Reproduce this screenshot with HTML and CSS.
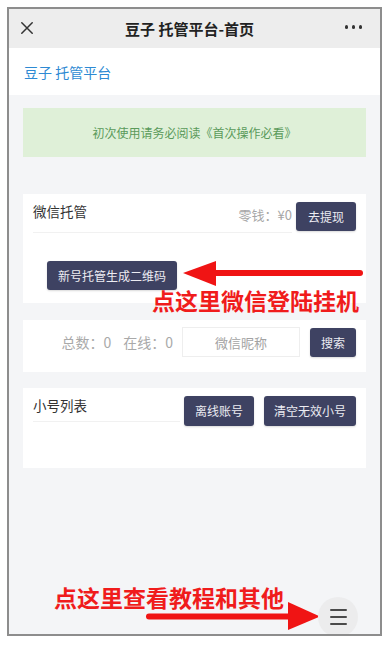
FILE: index.html
```html
<!DOCTYPE html>
<html lang="zh-CN">
<head>
<meta charset="utf-8">
<title>豆子 托管平台-首页</title>
<link rel="stylesheet" href="styles.css">
</head>
<body>
<div class="frame">
  <header class="topbar">
    <svg class="close" viewBox="0 0 12 12" width="12" height="12"><path d="M0.8 0.8 L11.2 11.2 M11.2 0.8 L0.8 11.2" stroke="#333" stroke-width="1.5" fill="none" stroke-linecap="round"/></svg>
    <h1 class="title">豆子 托管平台-首页</h1>
    <span class="more"><i></i><i></i><i></i></span>
  </header>
  <div class="brand">豆子 托管平台</div>
  <main class="content">
    <div class="notice">初次使用请务必阅读《首次操作必看》</div>

    <section class="card card-wx">
      <div class="card-head">
        <div class="head-left">
          <span class="card-title">微信托管</span>
          <span class="balance">零钱：¥0</span>
        </div>
        <button class="btn">去提现</button>
      </div>
      <div class="card-body">
        <button class="btn">新号托管生成二维码</button>
      </div>
    </section>

    <section class="card card-search">
      <span class="stat">总数：0</span>
      <span class="stat">在线：0</span>
      <input class="nick" type="text" placeholder="微信昵称">
      <button class="btn">搜索</button>
    </section>

    <section class="card card-list">
      <div class="card-head">
        <div class="head-left">
          <span class="card-title">小号列表</span>
        </div>
        <div class="head-btns">
          <button class="btn">离线账号</button>
          <button class="btn">清空无效小号</button>
        </div>
      </div>
    </section>
  </main>

  <svg class="annot" viewBox="0 0 371 625" width="371" height="625">
    <line x1="205" y1="264" x2="351" y2="264" stroke="#f01414" stroke-width="6" stroke-linecap="round"/>
    <polygon points="174,264 207,252 207,277" fill="#f01414"/>
    <line x1="140" y1="607.5" x2="284" y2="607.5" stroke="#f01414" stroke-width="6" stroke-linecap="round"/>
    <polygon points="311,607.5 279,593 279,621" fill="#f01414"/>
  </svg>
  <div class="tip tip-login">点这里微信登陆挂机</div>
  <div class="tip tip-menu">点这里查看教程和其他</div>

  <button class="fab" aria-label="菜单"><i></i><i></i><i></i></button>
</div>
</body>
</html>
```

FILE: styles.css
```css
* { box-sizing: border-box; }
html, body { margin: 0; padding: 0; background: #fff; }
body {
  font-family: "Noto Sans CJK SC", "Noto Sans", sans-serif;
  color: #333;
}
.frame {
  position: relative;
  margin: 7px 0 0 7px;
  width: 375px;
  height: 629px;
  border: 2px solid #8d8d8d;
  background: #f4f5f7;
  overflow: hidden;
  display: flex;
  flex-direction: column;
}
.topbar {
  height: 39px;
  flex: none;
  background: #ededed;
  display: grid;
  grid-template-columns: 1fr auto 1fr;
  align-items: center;
  padding: 0 18px 0 12px;
}
.close { display: block; margin-top: -2px; }
.title {
  margin: 0 4px 0 0;
  font-size: 15px;
  font-weight: 700;
  color: #222;
  line-height: 20px;
}
.more {
  justify-self: end;
  display: flex;
  gap: 3.3px;
  margin-top: -3px;
}
.more i {
  width: 3.5px;
  height: 3.5px;
  border-radius: 50%;
  background: #333;
}
.brand {
  height: 47px;
  flex: none;
  background: #fff;
  display: flex;
  align-items: center;
  padding-left: 15px;
  font-size: 14px;
  color: #2e8ad3;
}
.content {
  padding: 13px 14px 0;
  display: flex;
  flex-direction: column;
}
.notice {
  height: 49px;
  background: #dff0d8;
  display: flex;
  align-items: center;
  justify-content: center;
  font-size: 12px;
  color: #5a9a5a;
}
.card {
  background: #fff;
}
.card-wx { margin-top: 37px; height: 109px; }
.card-search { margin-top: 17px; height: 52px; }
.card-list { margin-top: 16px; height: 80px; }

.card-head {
  display: flex;
  align-items: flex-start;
  padding: 7px 10px 0;
  gap: 4px;
}
.head-left {
  flex: 1;
  display: flex;
  justify-content: space-between;
  align-items: flex-start;
  padding-bottom: 7px;
  border-bottom: 1px solid #f1f1f1;
}
.card-title {
  font-size: 13.5px;
  line-height: 20px;
  color: #333;
}
.balance {
  font-size: 13px;
  line-height: 20px;
  margin-top: 4px;
  color: #a6a6a6;
}
.btn {
  font-family: inherit;
  height: 29px;
  padding: 0 12px;
  border: none;
  border-radius: 3px;
  background: #3e4262;
  color: #ececf2;
  font-size: 12px;
  line-height: 29px;
  margin-top: 1px;
  box-shadow: 0 1px 2px rgba(0,0,0,0.15);
}
.card-body {
  padding: 28px 0 0 24px;
}
.card-body .btn { margin-top: 0; padding: 0 11px; }

.card-search {
  display: flex;
  align-items: center;
  justify-content: flex-end;
  padding: 0 10px 8px;
}
.stat {
  font-size: 14px;
  color: #a9a9a9;
  margin-right: 12px;
}
.stat + .stat { margin-right: 9px; }
.nick {
  font-family: inherit;
  width: 118px;
  height: 30px;
  border: 1px solid #eeeeee;
  text-align: center;
  font-size: 13px;
  color: #333;
  outline: none;
  margin-right: 10px;
}
.nick::placeholder { color: #a3a3a3; }
.card-search .btn { padding: 0 11px; margin-top: 0; }

.head-btns {
  display: flex;
  gap: 10px;
}
.head-btns .btn { padding: 0 11px; height: 30px; line-height: 30px; }
.head-btns .btn + .btn { padding: 0 10px; }
.card-list .head-left { padding-bottom: 6px; }

.annot {
  position: absolute;
  left: 0;
  top: 0;
  pointer-events: none;
}
.tip {
  position: absolute;
  font-size: 23px;
  line-height: 23px;
  font-weight: 700;
  color: #f01c1c;
  white-space: nowrap;
}
.tip-login { left: 143px; top: 280px; }
.tip-menu { left: 45px; top: 577px; }

.fab {
  position: absolute;
  left: 309px;
  top: 588px;
  width: 40px;
  height: 40px;
  border-radius: 50%;
  border: none;
  background: #ececed;
  padding: 0;
  display: flex;
  flex-direction: column;
  align-items: center;
  justify-content: center;
  gap: 4.5px;
}
.fab i {
  display: block;
  width: 17px;
  height: 2.5px;
  border-radius: 1px;
  background: #4a4a4a;
}
```
